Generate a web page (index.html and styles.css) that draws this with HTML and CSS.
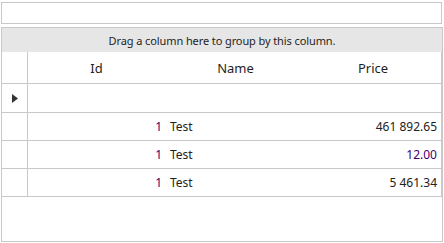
FILE: index.html
```html
<!DOCTYPE html>
<html>
<head>
<meta charset="utf-8">
<link rel="stylesheet" href="styles.css">
</head>
<body>
<div class="search"></div>
<div class="grid">
  <div class="group-panel">Drag a column here to group by this column.</div>
  <div class="rows">
    <div class="row header">
      <div class="ind"></div>
      <div class="cell c-id center">Id</div>
      <div class="cell c-name center">Name</div>
      <div class="cell c-price center">Price</div>
    </div>
    <div class="row new">
      <div class="ind"><svg width="6" height="9" viewBox="0 0 6 9"><path d="M0 0 L6 4.5 L0 9 Z" fill="#333"/></svg></div>
      <div class="cell c-id"></div>
      <div class="cell c-name"></div>
      <div class="cell c-price"></div>
    </div>
    <div class="row data">
      <div class="ind"></div>
      <div class="cell c-id right num">1</div>
      <div class="cell c-name">Test</div>
      <div class="cell c-price right">461 892.65</div>
    </div>
    <div class="row data">
      <div class="ind"></div>
      <div class="cell c-id right num">1</div>
      <div class="cell c-name">Test</div>
      <div class="cell c-price right num">12.00</div>
    </div>
    <div class="row data">
      <div class="ind"></div>
      <div class="cell c-id right num">1</div>
      <div class="cell c-name">Test</div>
      <div class="cell c-price right">5 461.34</div>
    </div>
  </div>
</div>
</body>
</html>
```
FILE: styles.css
```css
html, body {
  margin: 0;
  padding: 0;
  background: #ffffff;
}
body {
  width: 444px;
  height: 243px;
  overflow: hidden;
  font-family: "Noto Sans", "Open Sans", sans-serif;
  color: #222;
}
.search {
  margin: 2px 2px 0 1px;
  height: 20px;
  border: 1px solid #c8c8c8;
}
.grid {
  margin: 3px 1px 0 1px;
  height: 213px;
  border: 1px solid #c8c8c8;
  display: flex;
  flex-direction: column;
}
.group-panel {
  height: 24px;
  background: #e6e6e6;
  display: flex;
  align-items: center;
  justify-content: center;
  font-size: 11px;
  color: #1e1e1e;
  letter-spacing: -0.1px;
}
.rows {
  display: flex;
  flex-direction: column;
}
.row {
  display: flex;
  border-bottom: 1px solid #c8c8c8;
  border-right: 1px solid #c8c8c8;
}
.row.header { height: 31px; font-size: 13px; color: #1e1e1e; }
.row.new { height: 28px; }
.row.data { height: 27px; font-size: 12px; }
.ind {
  width: 26px;
  border-right: 1px solid #c8c8c8;
  display: flex;
  align-items: center;
  justify-content: center;
  padding-left: 1px;
  box-sizing: border-box;
}
.cell {
  display: flex;
  align-items: center;
  box-sizing: border-box;
}
.c-id { width: 137px; }
.c-name { width: 141px; padding-left: 5px; }
.c-price { width: 134px; }
.center { justify-content: center; padding: 0; }
.right { justify-content: flex-end; padding-right: 3px; }
.num { color: #400070; }
.row.header .cell { padding-top: 1px; }
```
